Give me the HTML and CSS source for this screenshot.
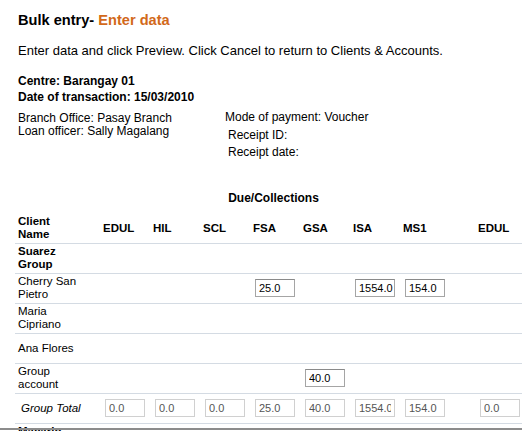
FILE: index.html
```html
<!DOCTYPE html>
<html>
<head>
<meta charset="utf-8">
<link rel="stylesheet" href="styles.css">
</head>
<body>
<div class="page">
  <h1 class="title">Bulk entry- <span class="accent">Enter data</span></h1>
  <p class="intro">Enter data and click Preview. Click Cancel to return to Clients &amp; Accounts.</p>
  <div class="meta-bold">
    <div>Centre: Barangay 01</div>
    <div>Date of transaction: 15/03/2010</div>
  </div>
  <div class="meta">
    <div class="meta-left">
      <div>Branch Office: Pasay Branch</div>
      <div>Loan officer: Sally Magalang</div>
    </div>
    <div class="meta-right">
      <div class="mode">Mode of payment: Voucher</div>
      <div class="receipt">Receipt ID:</div>
      <div class="receipt">Receipt date:</div>
    </div>
  </div>
  <table class="grid">
    <caption>Due/Collections</caption>
    <colgroup>
      <col class="c-name"><col class="c-num"><col class="c-num"><col class="c-num"><col class="c-num"><col class="c-num"><col class="c-num"><col class="c-num"><col class="c-last">
    </colgroup>
    <thead>
      <tr>
        <th class="name">Client Name</th>
        <th>EDUL</th><th>HIL</th><th>SCL</th><th>FSA</th><th>GSA</th><th>ISA</th><th>MS1</th><th class="last">EDUL</th>
      </tr>
    </thead>
    <tbody>
      <tr>
        <td class="name group-name">Suarez Group</td>
        <td></td><td></td><td></td><td></td><td></td><td></td><td></td><td class="last"></td>
      </tr>
      <tr>
        <td class="name">Cherry San Pietro</td>
        <td></td><td></td><td></td>
        <td><input class="field" type="text" value="25.0"></td>
        <td></td>
        <td><input class="field" type="text" value="1554.0"></td>
        <td><input class="field" type="text" value="154.0"></td>
        <td class="last"></td>
      </tr>
      <tr>
        <td class="name">Maria Cipriano</td>
        <td></td><td></td><td></td><td></td><td></td><td></td><td></td><td class="last"></td>
      </tr>
      <tr>
        <td class="name">Ana Flores</td>
        <td></td><td></td><td></td><td></td><td></td><td></td><td></td><td class="last"></td>
      </tr>
      <tr>
        <td class="name">Group account</td>
        <td></td><td></td><td></td><td></td>
        <td><input class="field" type="text" value="40.0"></td>
        <td></td><td></td><td class="last"></td>
      </tr>
      <tr>
        <td class="name total-label">Group Total</td>
        <td><input class="field total" type="text" value="0.0" readonly></td>
        <td><input class="field total" type="text" value="0.0" readonly></td>
        <td><input class="field total" type="text" value="0.0" readonly></td>
        <td><input class="field total" type="text" value="25.0" readonly></td>
        <td><input class="field total" type="text" value="40.0" readonly></td>
        <td><input class="field total" type="text" value="1554.0" readonly></td>
        <td><input class="field total" type="text" value="154.0" readonly></td>
        <td class="last"><input class="field total" type="text" value="0.0" readonly></td>
      </tr>
      <tr>
        <td class="name group-name">Macario Group</td>
        <td></td><td></td><td></td><td></td><td></td><td></td><td></td><td class="last"></td>
      </tr>
    </tbody>
  </table>
</div>
<div class="frame-edge"></div>
</body>
</html>
```
FILE: styles.css
```css
html, body {
  margin: 0;
  padding: 0;
  background: #ffffff;
  overflow: hidden;
}
body {
  font-family: "Liberation Sans", Arial, sans-serif;
  font-size: 12px;
  color: #000;
}
.page {
  padding: 11px 0 0 18px;
}
.title {
  margin: 0;
  font-size: 14.6px;
  line-height: 18px;
  font-weight: bold;
}
.accent {
  color: #d2691a;
}
.intro {
  margin: 14px 0 0;
  font-size: 13px;
  line-height: 15px;
}
.meta-bold {
  margin-top: 15px;
  font-weight: bold;
  line-height: 16px;
}
.meta {
  display: flex;
  margin-top: 7px;
}
.meta-left {
  width: 207px;
  line-height: 13px;
}
.meta-right {
  line-height: 17.5px;
  margin-top: -3px;
}
.receipt {
  padding-left: 3px;
}
.grid {
  margin: 29px 0 0 -3px;
  border-collapse: collapse;
  table-layout: fixed;
  width: 517px;
  font-size: 11.5px;
}
.grid caption {
  font-weight: bold;
  font-size: 12px;
  line-height: 14px;
  padding-bottom: 9px;
}
.c-name { width: 85px; }
.c-num { width: 50px; }
.c-last { width: 82px; }
.grid th,
.grid td {
  padding: 0 3px;
  height: 29px;
  text-align: left;
  vertical-align: middle;
  border-bottom: 1px solid #d4dbe3;
  line-height: 13px;
}
.grid th {
  font-weight: bold;
}
.grid th.name,
.grid td.name {
  padding-right: 19px;
}
.grid .last {
  padding-left: 28px;
}
.group-name {
  font-weight: bold;
}
.total-label {
  font-style: italic;
}
.grid td.total-label {
  padding-left: 6px;
  padding-right: 16px;
}
.field {
  display: block;
  box-sizing: border-box;
  width: 40px;
  height: 18px;
  margin: 0 0 0 2px;
  padding: 0 0 0 3px;
  font-family: "Liberation Sans", Arial, sans-serif;
  font-size: 11px;
  color: #000;
  background: #fff;
  border: 1px solid #a5a5a5;
  border-top-color: #8a8a8a;
  border-radius: 0;
  outline: none;
}
.field.total {
  padding-right: 3px;
  color: #555;
  border: 1px solid #d0d0d0;
}
.frame-edge {
  position: fixed;
  left: 0;
  right: 0;
  bottom: 1px;
  height: 2px;
  background: #8c8c8c;
}
```
